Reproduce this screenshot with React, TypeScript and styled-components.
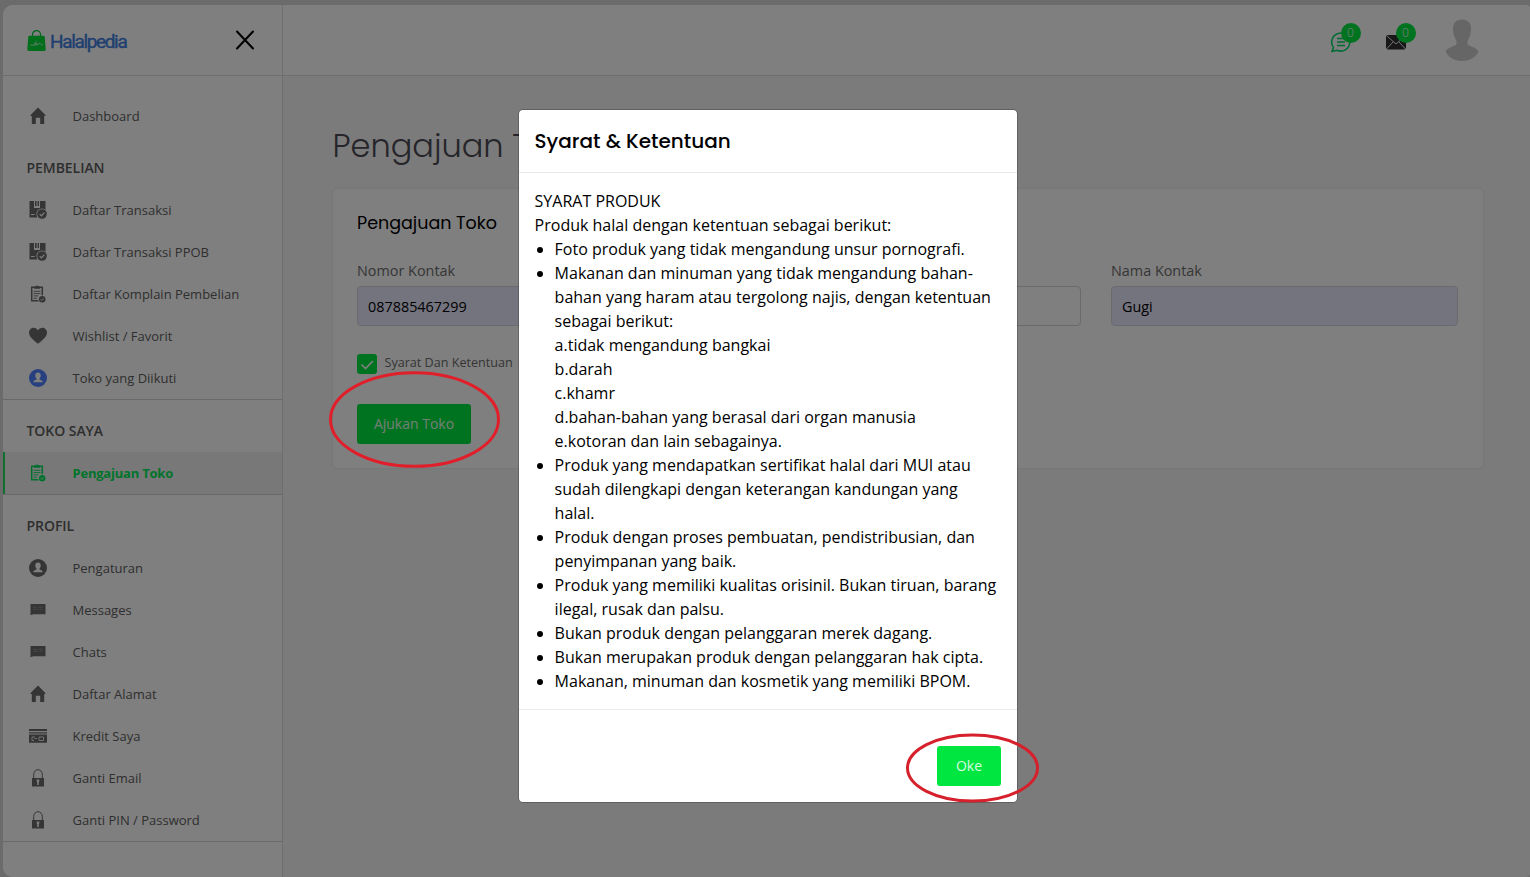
import React from "react";
import styled, { createGlobalStyle } from "styled-components";

const GlobalStyle = createGlobalStyle`
  * { box-sizing: border-box; }
  body {
    margin: 0;
    background: #d6d6d6;
    font-family: "Open Sans", "Noto Sans", sans-serif;
    color: #000;
    overflow: hidden;
  }
`;

const HEADING_FONT = `"Poppins", "Inter", sans-serif`;

const Page = styled.div`
  height: 877px;
  padding: 5px 0 0 3px;
`;

const Shell = styled.div`
  height: 872px;
  display: flex;
  background: #f7f7f7;
  border-radius: 10px 4px 4px 10px;
  overflow: hidden;
`;

const Sidebar = styled.aside`
  width: 280px;
  flex: none;
  background: #fff;
  border-right: 1px solid #dcdcdc;
`;

const Brand = styled.div`
  height: 71px;
  display: flex;
  align-items: center;
  justify-content: space-between;
  padding: 0 27px 0 24px;
  border-bottom: 1px solid #dcdcdc;
`;

const Logo = styled.div`
  display: flex;
  align-items: center;
  gap: 4px;
  padding-top: 1px;
`;

const LogoText = styled.span`
  display: block;
  padding-top: 3px;
  font: 400 19px/24px "Roboto", sans-serif;
  letter-spacing: -1.35px;
  color: #3f80e0;
  -webkit-text-stroke: 0.4px #3f80e0;
`;

const Nav = styled.nav`
  padding-top: 19px;
`;

const Section = styled.section<{ $line?: boolean }>`
  border-bottom: ${(p) => (p.$line ? "1px solid #d2d2d2" : "0")};
`;

const SectionTitle = styled.h2`
  margin: 0;
  height: 52px;
  padding: 21px 0 0 23.5px;
  font-size: 14px;
  line-height: 20px;
  font-weight: 600;
  color: #5c5c5c;
  letter-spacing: -0.05px;
`;

const NavItem = styled.a<{ $active?: boolean }>`
  display: flex;
  align-items: center;
  height: 42px;
  padding-left: ${(p) => (p.$active ? 23 : 25)}px;
  border-left: ${(p) => (p.$active ? "2px solid #20e060" : "0")};
  background: ${(p) => (p.$active ? "#f0f0f0" : "transparent")};
  color: ${(p) => (p.$active ? "#00e858" : "#5e5e5e")};
  font-size: 13px;
  letter-spacing: ${(p) => (p.$active ? "-0.22px" : "0")};
  font-weight: ${(p) => (p.$active ? 700 : 400)};
`;

const NavIcon = styled.span<{ $color?: string }>`
  display: flex;
  width: 20px;
  height: 20px;
  margin-right: 24.5px;
  color: ${(p) => p.$color || "#6a6a6a"};
`;

const Main = styled.div`
  flex: 1;
`;

const Topbar = styled.header`
  height: 71px;
  display: flex;
  justify-content: flex-end;
  background: #fff;
  border-bottom: 1px solid #dcdcdc;
`;

const Notice = styled.div<{ $width: number }>`
  position: relative;
  width: ${(p) => p.$width}px;
  padding-top: 25px;
`;

const Badge = styled.span`
  position: absolute;
  left: 10.5px;
  top: 18px;
  width: 20px;
  height: 20px;
  border-radius: 50%;
  background: #00e640;
  color: #fff;
  font-size: 12px;
  font-weight: 300;
  line-height: 19px;
  text-align: center;
`;

const Avatar = styled.div`
  width: 85px;
  padding-top: 13px;
`;

const Content = styled.main`
  padding: 42px 46px 0 49px;
`;

const PageTitle = styled.h1`
  margin: 0;
  height: 70px;
  padding-left: 0.5px;
  font: 300 32px/56px ${HEADING_FONT};
  color: #4a4a55;
  white-space: nowrap;
`;

const Card = styled.div`
  height: 281px;
  background: #fff;
  border: 1px solid #efefef;
  border-radius: 6px;
  box-shadow: 0 0 3px rgba(0, 0, 0, 0.04);
  padding: 20px 25px 0 24px;
`;

const CardTitle = styled.h3`
  margin: 0;
  font: 400 17.5px/28px ${HEADING_FONT};
  color: #000;
`;

const Fields = styled.div`
  display: grid;
  grid-template-columns: repeat(3, 347px);
  column-gap: 30px;
  padding-top: 23px;
`;

const Label = styled.label`
  display: block;
  font-size: 14.4px;
  line-height: 22px;
  color: #6c6c6c;
  margin-bottom: 4px;
`;

const Input = styled.div<{ $filled?: boolean }>`
  height: 40px;
  padding: 0 10px;
  line-height: 40px;
  font-size: 14.4px;
  border: 1px solid #d4d4d8;
  border-radius: 4px;
  background: ${(p) => (p.$filled ? "#e8e8fc" : "#fff")};
`;

const Agree = styled.div`
  display: flex;
  align-items: center;
  gap: 7.500px;
  height: 20px;
  margin: 28px 0 30px;
  font-size: 12.600px;
  line-height: 18px;
  color: #6c6c6c;
`;

const AgreeText = styled.span`
  padding-bottom: 2px;
`;

const Check = styled.span`
  display: flex;
  width: 20px;
  height: 20px;
  border-radius: 3px;
  background: #00e640;
`;

const Button = styled.button<{ $width: number; $color: string; $text: string }>`
  display: block;
  width: ${(p) => p.$width}px;
  height: 40px;
  border: 0;
  border-radius: 3px;
  background: ${(p) => p.$color};
  color: ${(p) => p.$text};
  font: 400 14px "Open Sans", sans-serif;
  padding: 0 0 2px;
`;

const Backdrop = styled.div`
  position: absolute;
  inset: 0;
  height: 877px;
  background: rgba(0, 0, 0, 0.5);
  display: flex;
  justify-content: center;
  align-items: flex-start;
  padding: 109px 0 0 6px;
`;

const Modal = styled.div`
  width: 500px;
  height: 694px;
  background: #fff;
  background-clip: padding-box;
  border: 1px solid rgba(0, 0, 0, 0.2);
  border-radius: 5px;
`;

const ModalTitle = styled.h5`
  margin: 0;
  height: 63px;
  padding-left: 15.500px;
  font: 500 20px/63px ${HEADING_FONT};
  border-bottom: 1px solid #e9e9e9;
`;

const ModalBody = styled.div`
  height: 537px;
  padding: 16px 15.600px;
  font-size: 16px;
  line-height: 24px;
  border-bottom: 1px solid #e9e9e9;
  white-space: nowrap;
`;

const Terms = styled.ul`
  margin: 0;
  padding-left: 20px;
`;

const ModalFooter = styled.div`
  display: flex;
  justify-content: flex-end;
  padding: 36px 16px 0 0;
`;

const Marks = styled.svg`
  position: absolute;
  left: 0;
  top: 0;
  pointer-events: none;
`;

type IconName = "home" | "box" | "clip" | "heart" | "user" | "msg" | "card" | "lock";

const shapes: Record<IconName, React.ReactNode> = {
  home: <path d="M10 1.500 2.600 9v1h1.200v8h4v-6.200h4.400V18h4v-8h1.200V9Z" fill="currentColor" />,
  box: (
    <>
      <path d="M1.500 1H6v7h6V1h5.500v9H13l-3.500 4v3.500h-8ZM7 1h1.600v5H7ZM9.600 1H11v5H9.600Z" fill="currentColor" />
      <path d="M3 14.500h3.500" stroke="#fff" strokeWidth="1" />
      <circle cx="14" cy="14" r="5.600" fill="#fff" />
      <circle cx="14" cy="14" r="4.800" fill="currentColor" />
      <path d="m11.700 14.100 1.700 1.700 3-3.200" fill="none" stroke="#fff" strokeWidth="1.200" />
    </>
  ),
  clip: (
    <>
      <path d="M3.700 3.300h10.600v13.500H3.700Z" fill="none" stroke="currentColor" strokeWidth="1.500" />
      <path d="M6 4.800V2.400h1.800a1.300 1.300 0 0 1 2.500 0h1.800v2.400Z" fill="currentColor" />
      <path d="M5.500 7.300h7M5.500 9.600h7M5.500 11.900h5M5.500 14.200h3.500" stroke="currentColor" strokeWidth=".9" />
      <circle cx="14.200" cy="15.300" r="4" fill="#fff" />
      <circle cx="14.200" cy="15.300" r="3.300" fill="currentColor" />
      <path d="m12.600 15.300 1.200 1.200 2-2.200" fill="none" stroke="#fff" strokeWidth=".8" />
    </>
  ),
  heart: <path d="M10 17.800C7 15.300 1 11 1 6.700 1 4 3 1.800 5.600 1.800c1.900 0 3.500 1 4.400 2.600.9-1.600 2.500-2.600 4.400-2.600C17 1.800 19 4 19 6.700c0 4.300-6 8.600-9 11.100Z" fill="currentColor" />,
  user: (
    <>
      <circle cx="10" cy="10" r="9" fill="currentColor" />
      <path d="M10 4.600c1.700 0 2.700 1.200 2.700 2.800 0 1.300-.5 2.300-1.200 3v1.100c1.700.5 3 1 3.400 2.700H5.100c.4-1.700 1.700-2.200 3.400-2.700v-1.100c-.7-.7-1.200-1.700-1.200-3 0-1.600 1-2.800 2.700-2.800Z" fill="#fff" />
    </>
  ),
  msg: (
    <>
      <path d="M2.500 4h15v10.300H5.300L2.500 15.200Z" fill="currentColor" />
      <path d="M5 7.200h4m1 0h4.500M5 9.300h6m1 0h2.500" stroke="#999" strokeWidth=".8" />
    </>
  ),
  card: (
    <>
      <path d="M1 3h18v1.900H1ZM1 6.200h18v1.200H1ZM1 8.600h18v8.200H1Z" fill="currentColor" />
      <path d="M7 11H4v3.500h2M9 12.500H6.500M11 11h4.500v3.500H11Z" fill="none" stroke="#e0e0e0" strokeWidth="1" />
    </>
  ),
  lock: (
    <>
      <path d="M5.700 11V6.500a4.300 4.800 0 0 1 8.600 0V11" fill="none" stroke="currentColor" strokeWidth="1" />
      <path d="M4 10h12v8.500H4Z" fill="currentColor" />
      <path d="M8.700 11.500h2.600v2l-.5.500v3H9.200v-3l-.5-.5Z" fill="#fff" />
    </>
  ),
};

const Item = ({ icon, label, active, color }: { icon: IconName; label: string; active?: boolean; color?: string }) => (
  <NavItem $active={active}>
    <NavIcon $color={color}>
      <svg width="20" height="20" viewBox="0 0 20 20">{shapes[icon]}</svg>
    </NavIcon>
    {label}
  </NavItem>
);

export default function App() {
  return (
    <>
      <GlobalStyle />
      <Page>
        <Shell>
          <Sidebar>
            <Brand>
              <Logo>
                <svg width="19" height="23" viewBox="0 0 19 23">
                  <path d="M5.500 8V5.600a4 4 0 0 1 8 0V8" fill="none" stroke="#00c83a" strokeWidth="1.200" />
                  <path d="M2.500 6.800h14q1 0 1.200 1l1 12.500q.1 1.700-1.500 1.700H1.800q-1.600 0-1.500-1.700l1-12.500q.1-1 1.200-1Z" fill="#00dc34" />
                  <path d="M3.500 16h4c1 0 1-1.500.3-3M8 16c2 0 2-1 1.500-2.500M10 15.800c1.500.5 2-2.800 3-1.500s2 1.800 3 1.300M9.200 11.500v.8" fill="none" stroke="#e8ffee" strokeWidth=".9" />
                </svg>
                <LogoText>Halalpedia</LogoText>
              </Logo>
              <svg width="20" height="20" viewBox="0 0 20 20">
                <path d="m2 1.500 16 17M18 1.500l-16 17" stroke="#000" strokeWidth="2" strokeLinecap="round" />
              </svg>
            </Brand>
            <Nav>
              <Section>
                <Item icon="home" label="Dashboard" />
              </Section>
              <Section $line>
                <SectionTitle>PEMBELIAN</SectionTitle>
                <Item icon="box" label="Daftar Transaksi" />
                <Item icon="box" label="Daftar Transaksi PPOB" />
                <Item icon="clip" label="Daftar Komplain Pembelian" />
                <Item icon="heart" label="Wishlist / Favorit" />
                <Item icon="user" label="Toko yang Diikuti" color="#5080ff" />
              </Section>
              <Section $line>
                <SectionTitle>TOKO SAYA</SectionTitle>
                <Item icon="clip" label="Pengajuan Toko" active color="#00e058" />
              </Section>
              <Section $line>
                <SectionTitle>PROFIL</SectionTitle>
                <Item icon="user" label="Pengaturan" />
                <Item icon="msg" label="Messages" />
                <Item icon="msg" label="Chats" />
                <Item icon="home" label="Daftar Alamat" />
                <Item icon="card" label="Kredit Saya" />
                <Item icon="lock" label="Ganti Email" />
                <Item icon="lock" label="Ganti PIN / Password" />
              </Section>
            </Nav>
          </Sidebar>
          <Main>
            <Topbar>
              <Notice $width={55}>
                <svg width="22" height="24" viewBox="0 0 22 24">
                  <path d="M2 21.500 3.500 17.500a9 9 0 1 1 3.500 2.800Z" fill="none" stroke="#00d868" strokeWidth="1.600" strokeLinejoin="round" />
                  <path d="M7 8.500h7M7 12h8M7 15.500h8" stroke="#00d868" strokeWidth="1.500" />
                </svg>
                <Badge>0</Badge>
              </Notice>
              <Notice $width={60}>
                <svg width="22" height="24" viewBox="0 0 22 24">
                  <rect x="1" y="5" width="20" height="14.500" rx="2" fill="#303030" />
                  <path d="m1.500 5.500 9.500 8.500 9.500-8.500M1.500 19l6.500-7M20.500 19 14 12" fill="none" stroke="#eee" strokeWidth="1" />
                </svg>
                <Badge>0</Badge>
              </Notice>
              <Avatar>
                <svg width="34" height="43" viewBox="0 0 34 43">
                  <path d="M17 1.500c6 0 9 3.500 9 9.500 0 4-1 7-2.500 10-1.500 2.500-1.500 5.500.5 6.500 4 1.500 8 3 9.500 6C31 39 25 43 17 43S3 39 .5 33.500c1.500-3 5.500-4.500 9.500-6 2-1 2-4 .5-6.500C9 18 8 15 8 11c0-6 3-9.500 9-9.500Z" fill="#ccc" />
                </svg>
              </Avatar>
            </Topbar>
            <Content>
              <PageTitle>Pengajuan Toko</PageTitle>
              <Card>
                <CardTitle>Pengajuan Toko</CardTitle>
                <Fields>
                  <div>
                    <Label>Nomor Kontak</Label>
                    <Input $filled>087885467299</Input>
                  </div>
                  <div>
                    <Label>&nbsp;</Label>
                    <Input />
                  </div>
                  <div>
                    <Label>Nama Kontak</Label>
                    <Input $filled>Gugi</Input>
                  </div>
                </Fields>
                <Agree>
                  <Check>
                    <svg width="20" height="20" viewBox="0 0 20 20">
                      <path d="m4.500 10.500 4 4 7.500-7.500" fill="none" stroke="#fff" strokeWidth="1.600" />
                    </svg>
                  </Check>
                  <AgreeText>Syarat Dan Ketentuan</AgreeText>
                </Agree>
                <Button $width={114} $color="#00e640" $text="#e4ffec">Ajukan Toko</Button>
              </Card>
            </Content>
          </Main>
        </Shell>
      </Page>
      <Backdrop>
        <Modal>
          <ModalTitle>Syarat &amp; Ketentuan</ModalTitle>
          <ModalBody>
            SYARAT PRODUK
            <br />
            Produk halal dengan ketentuan sebagai berikut:
            <Terms>
              <li>Foto produk yang tidak mengandung unsur pornografi.</li>
              <li>
                Makanan dan minuman yang tidak mengandung bahan-<br />
                bahan yang haram atau tergolong najis, dengan ketentuan<br />
                sebagai berikut:<br />
                a.tidak mengandung bangkai<br />
                b.darah<br />
                c.khamr<br />
                d.bahan-bahan yang berasal dari organ manusia<br />
                e.kotoran dan lain sebagainya.
              </li>
              <li>
                Produk yang mendapatkan sertifikat halal dari MUI atau<br />
                sudah dilengkapi dengan keterangan kandungan yang<br />
                halal.
              </li>
              <li>
                Produk dengan proses pembuatan, pendistribusian, dan<br />
                penyimpanan yang baik.
              </li>
              <li>
                Produk yang memiliki kualitas orisinil. Bukan tiruan, barang<br />
                ilegal, rusak dan palsu.
              </li>
              <li>Bukan produk dengan pelanggaran merek dagang.</li>
              <li>Bukan merupakan produk dengan pelanggaran hak cipta.</li>
              <li>Makanan, minuman dan kosmetik yang memiliki BPOM.</li>
            </Terms>
          </ModalBody>
          <ModalFooter>
            <Button $width={64} $color="#00e640" $text="#d9fbe2">Oke</Button>
          </ModalFooter>
        </Modal>
      </Backdrop>
      <Marks width="1530" height="877" viewBox="0 0 1530 877">
        <ellipse cx="414.500" cy="419.500" rx="84" ry="46.800" fill="none" stroke="#e11f2b" strokeWidth="3" />
        <ellipse cx="972.500" cy="768" rx="65" ry="33" fill="none" stroke="#d6202b" strokeWidth="3" />
      </Marks>
    </>
  );
}
